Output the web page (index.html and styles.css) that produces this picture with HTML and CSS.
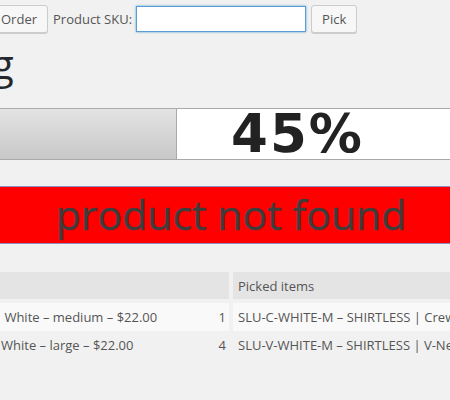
FILE: index.html
```
<!DOCTYPE html>
<html lang="en">
<head>
  <meta charset="UTF-8">
  <meta name="viewport" content="width=device-width, initial-scale=1.0">
  <title>Picking</title>
  <link rel="stylesheet" href="styles.css">
</head>
<body>
  <div class="toolbar">
    <button class="btn btn-order">Order</button>
    <label for="sku">Product SKU:</label>
    <input type="text" id="sku" class="sku-input">
    <button class="btn">Pick</button>
  </div>

  <h1 class="title">Picking</h1>

  <div class="progress">
    <div class="progress-fill" style="width: 186px;"></div>
    <div class="progress-label">45%</div>
  </div>

  <div class="notice">product not found</div>

  <table class="items">
    <thead>
      <tr>
        <th class="col-order"></th>
        <th>Picked items</th>
      </tr>
    </thead>
    <tbody>
      <tr class="odd">
        <td>&nbsp;White – medium – $22.00<span class="qty">1</span></td>
        <td>SLU-C-WHITE-M – SHIRTLESS | Crew Neck</td>
      </tr>
      <tr>
        <td>White – large – $22.00<span class="qty">4</span></td>
        <td>SLU-V-WHITE-M – SHIRTLESS | V-Neck</td>
      </tr>
    </tbody>
  </table>
</body>
</html>
```

FILE: styles.css
```
* {
  box-sizing: border-box;
}
body, html {
  margin: 0;
  padding: 0;
  background: #f1f1f1;
  font-family: "Open Sans", sans-serif;
  color: #444;
  overflow: hidden;
}

/* bar atas */
.toolbar {
  display: flex;
  align-items: center;
  gap: 4px;
  padding-top: 5px;
  font-size: 13px;
}

.btn {
  height: 28px;
  padding: 0 10px;
  background: #f7f7f7;
  border: 1px solid #ccc;
  border-radius: 3px;
  box-shadow: 0 1px 0 #ccc;
  color: #555;
  font-family: "Open Sans", sans-serif;
  font-size: 13px;
  white-space: nowrap;
}

.btn-order {
  margin-left: -10px;
  margin-right: 1px;
}

.toolbar label {
  color: #555;
  white-space: nowrap;
}

.sku-input {
  width: 170px;
  height: 26px;
  margin-right: 1px;
  border: 1px solid #5b9dd9;
  box-shadow: 0 0 2px rgba(30, 140, 190, 0.8);
  background: #fff;
}

.title {
  margin: 7px 0 0 -117px;
  font-size: 40px;
  font-weight: 400;
  line-height: 48px;
  color: #23282d;
  white-space: nowrap;
}

/* progress */
.progress {
  position: relative;
  height: 52px;
  margin: 20px -10px 0 -10px;
  border: 1px solid #aaa;
  background: #fff;
}

.progress-fill {
  height: 100%;
  background: linear-gradient(#e3e3e3, #c8c8c8);
  border-right: 1px solid #aaa;
}

.progress-label {
  position: absolute;
  left: 240px;
  top: 0;
  line-height: 50px;
  font-family: "DejaVu Sans", sans-serif;
  font-weight: bold;
  font-size: 53px;
  letter-spacing: 2px;
  color: #222;
}

.notice {
  margin: 26px -22px 0 -10px;
  height: 58px;
  padding-top: 2px;
  padding-bottom: 4px;
  background: #ff0000;
  border: 1px solid #8e8ebf;
  text-align: center;
  font-size: 41px;
  line-height: 50px;
  color: #3d3d3d;
  -webkit-text-stroke: 0.4px #3d3d3d;
}

/* tabel */
.items {
  margin: 28px 0 0 -8px;
  width: 800px;
  table-layout: fixed;
  border-spacing: 4px 0;
  font-size: 13px;
  color: #555;
}

.items th {
  height: 31px;
  padding: 0 5px 0 5px;
  border-bottom: 4px solid transparent;
  background: #e4e4e4;
  background-clip: padding-box;
  font-weight: 400;
  text-align: left;
}

.items .col-order {
  width: 233px;
}

.items td {
  height: 28px;
  padding: 0 5px;
  white-space: nowrap;
  overflow: hidden;
}

.items td:first-child {
  padding-right: 3px;
}

.items tr.odd td {
  background: #f9f9f9;
}

.qty {
  float: right;
}
```
